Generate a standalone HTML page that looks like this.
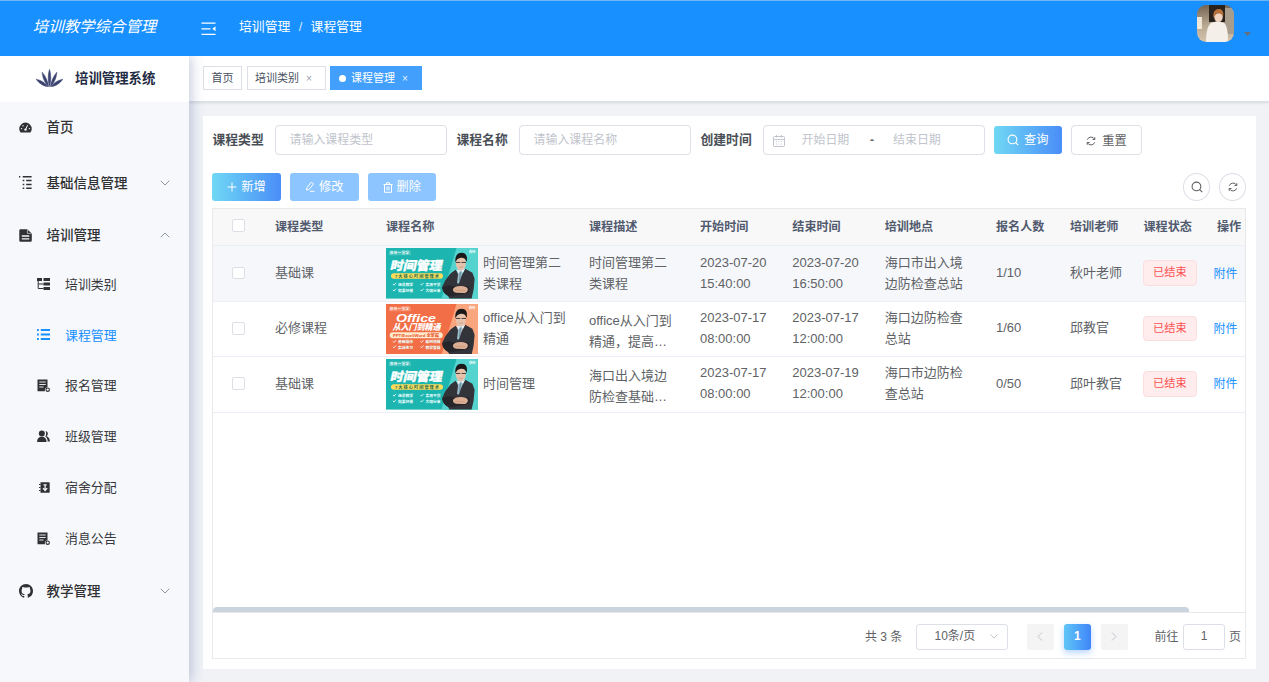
<!DOCTYPE html>
<html lang="zh-CN">
<head>
<meta charset="utf-8">
<title>培训教学综合管理</title>
<style>
*{box-sizing:border-box;margin:0;padding:0}
html,body{width:1269px;height:682px;overflow:hidden}
body{font-family:"Liberation Sans","Noto Sans CJK SC",sans-serif;background:#f0f2f6;color:#606266;position:relative;font-size:12.6px}
.abs{position:absolute}
#hdr{z-index:5;position:absolute;left:0;top:0;width:1269px;height:56px;background:#1890ff;border-top:1px solid #6db5f7}
#title{position:absolute;left:32.8px;top:14px;font-size:15.45px;font-style:italic;font-weight:400;color:#fff;line-height:24px;white-space:nowrap}
#crumb{position:absolute;left:239px;top:15px;line-height:22px;font-size:12.85px;color:#fff;white-space:nowrap}
#crumb .sep{margin:0 8.3px;font-weight:400;color:#d6e9ff}
#side{position:absolute;left:0;top:56px;width:189px;height:626px;background:#f6f8fc;box-shadow:2px 0 12px rgba(40,60,130,.28)}
#logo{position:absolute;left:0;top:0;width:189px;height:45.5px;background:#fff}
#logo span{position:absolute;left:75px;top:11.6px;font-size:13.4px;font-weight:700;color:#1f2c44;line-height:22px;white-space:nowrap}
.mi{position:absolute;left:0;width:189px;height:40px;line-height:40px;white-space:nowrap;color:#303133}
.mi .tx{position:absolute;left:46.5px;top:1px;font-size:13.5px;font-weight:500}
.mi.sub .tx{left:65px;font-size:12.9px;font-weight:400;color:#36383d}
.mi.act .tx{color:#1890ff}
.mi svg{position:absolute}
#tags{position:absolute;left:189px;top:56px;width:1080px;height:45.5px;background:#fff;box-shadow:0 1px 3px rgba(0,0,0,.09),0 0 3px rgba(0,0,0,.03);border-bottom:1px solid #dde0e7}
.tag{position:absolute;top:10px;height:24px;line-height:22px;border:1px solid #dcdfe6;background:#fff;color:#495060;font-size:11px;white-space:nowrap;padding:0 0 0 7.5px}
.tag.on{background:#42a0fc;border-color:#42a0fc;color:#fff}
.tag .x{display:inline-block;margin-left:7px;font-size:10.2px;color:#9aa1ad}
.tag.on .x{color:#e4f0ff}
.tag .dot{display:inline-block;width:7.5px;height:7.5px;border-radius:50%;background:#fff;margin-right:5px;position:relative;top:0}
#card{position:absolute;left:203px;top:116px;width:1052.5px;height:553px;background:#fff}
.lbl{position:absolute;font-size:12.8px;font-weight:700;color:#4a4f57;line-height:30px;top:9px;white-space:nowrap}
.inp{position:absolute;top:9px;height:30px;border:1px solid #dcdfe6;border-radius:4px;background:#fff;color:#c0c4cc;font-size:11.95px;line-height:28px;padding-left:13.5px;white-space:nowrap}
.btn{position:absolute;height:28px;border-radius:3px;color:#fff;font-size:12.2px;line-height:28px;white-space:nowrap;text-align:center}
.btn.g{background:linear-gradient(90deg,#6fd8f4 0%,#4a8df8 100%)}
.btn.l{background:#8cc5ff}
.btn.w{background:#fff;border:1px solid #dcdfe6;color:#606266;line-height:26px}
.cir{position:absolute;width:27px;height:27.6px;border:1px solid #dcdfe6;border-radius:50%;background:#fff}
#tb{position:absolute;left:9px;top:92px;width:1033.5px;height:405px;border:1px solid #e9e9ec;border-bottom:none;overflow:hidden}
#th{position:absolute;left:0;top:0;width:1040px;height:37px;background:#f8f8f9;border-bottom:1px solid #ebeef5}
#th span{position:absolute;top:7px;line-height:22px;font-size:12.1px;font-weight:700;color:#515a6e;white-space:nowrap}
.tr{position:absolute;left:0;width:1040px;border-bottom:1px solid #ebeef5;background:#fff}
.tr.hv{background:#f5f7fb}
.c{position:absolute;font-size:13px;line-height:21px;color:#606266;white-space:nowrap}
.ck{position:absolute;left:19px;width:12.6px;height:12.6px;border:1px solid #dcdfe6;border-radius:2px;background:#fff}
.st{position:absolute;left:930.2px;width:53.4px;height:25.6px;border:1px solid #fcdede;background:#ffeded;border-radius:4px;color:#f95252;font-size:11.2px;line-height:22.8px;text-align:center}
.lk{position:absolute;left:1000.5px;font-size:12px;line-height:22px;color:#1890ff;white-space:nowrap}
.thumb{position:absolute;left:173px}
#pg{position:absolute;left:9px;top:496px;width:1033.5px;height:47px;border:1px solid #e9e9ec;background:#fff;font-size:12px;color:#606266}
#pg .t{position:absolute;top:12.5px;line-height:22px;white-space:nowrap}
#pg .bx{position:absolute;top:11px;height:26px;border:1px solid #dcdfe6;border-radius:3px;background:#fff;line-height:23.5px;text-align:center}
#pg .pb{position:absolute;top:11px;width:27.5px;height:26px;border-radius:2px;background:#f4f4f5;color:#c0c4cc;text-align:center;line-height:25.5px}
#sb{position:absolute;left:10px;top:491px;width:976px;height:5.5px;background:#cad4df;border-radius:4px 4px 0 0}
</style>
</head>
<body>
<div id="hdr">
  <div id="title">培训教学综合管理</div>
  <svg class="abs" style="left:201px;top:21px" width="16" height="14" viewBox="0 0 16 14"><path d="M0.5 1.2H14.5M0.5 6.8H9.5M0.5 12.4H14.5" stroke="#fff" stroke-width="1.3" fill="none"/><path d="M14.5 4.3V9.3L11.3 6.8Z" fill="#fff"/></svg>
  <div id="crumb">培训管理<span class="sep">/</span>课程管理</div>
<svg class="abs" style="left:1197px;top:4px" width="37" height="37" viewBox="0 0 37 37">
<defs><filter id="avb" x="-10%" y="-10%" width="120%" height="120%"><feGaussianBlur stdDeviation=".5"/></filter><clipPath id="avc"><rect width="37" height="37" rx="9"/></clipPath>
<linearGradient id="avg" x1="0" y1="0" x2="0" y2="1"><stop offset="0" stop-color="#6b5a48"/><stop offset=".55" stop-color="#b9a892"/><stop offset="1" stop-color="#d9c9b4"/></linearGradient></defs>
<g clip-path="url(#avc)"><g filter="url(#avb)"><rect x="-3" y="-3" width="43" height="43" fill="url(#avg)"/>
<rect x="12" y="0" width="16" height="17" fill="#2a211b"/>
<rect x="0" y="12" width="5" height="12" fill="#efe6d6"/>
<rect x="28" y="3" width="9" height="26" fill="#a89c8c"/>
<path d="M9 37C9 26 11 19 15 17.5L21 16L27 18C30 20 31 27 31 37Z" fill="#f4efe8"/>
<ellipse cx="21.5" cy="11.5" rx="4.3" ry="5.5" fill="#f0d3c0"/>
<path d="M16.5 13C15.5 6 19 3.500 22.500 4C26 4.500 27 8 26 12C25 9 23 8 21 8.500C19 9 17.500 10.500 16.500 13Z" fill="#b5713a"/>
</g></g></svg>
<svg class="abs" style="left:1244px;top:30.5px" width="7" height="4.500" viewBox="0 0 7 4.500"><path d="M0 0H7L3.500 4.500Z" fill="#5f7186"/></svg>
</div>
<div id="tags">
  <div class="tag" style="left:14px;width:39px">首页</div>
  <div class="tag" style="left:57.5px;width:79px">培训类别<span class="x">×</span></div>
  <div class="tag on" style="left:141px;width:91.5px"><span class="dot"></span>课程管理<span class="x">×</span></div>
</div>
<div id="side">
  <div id="logo"><span>培训管理系统</span></div>
  <svg class="abs" style="left:36px;top:12.5px" width="27" height="18" viewBox="0 0 27 18"><g fill="#3b4470" stroke="#3b4470" stroke-width=".5"><path d="M13.5 17.5C12 13 11.6 6 13.5 0.3C15.4 6 15 13 13.5 17.5Z"/><path d="M12.6 17.6C9.5 15 6.5 9.5 6.2 3.2C9.6 7 12 12.5 12.6 17.6Z"/><path d="M14.4 17.6C17.5 15 20.5 9.5 20.8 3.2C17.4 7 15 12.5 14.4 17.6Z"/><path d="M12 17.8C8 17.4 3 14.5 0.2 10.2C5 11.2 9.6 14 12 17.8Z"/><path d="M15 17.8C19 17.4 24 14.5 26.8 10.2C22 11.2 17.4 14 15 17.8Z"/></g></svg>
  <div class="mi" style="top:51px"><svg style="left:19px;top:13.5px" width="13" height="13" viewBox="0 0 13 13"><path d="M6.5 1.6A6.2 6.2 0 0 0 0.3 7.8C0.3 9.3 0.8 10.6 1.6 11.4H11.4C12.2 10.6 12.7 9.3 12.7 7.8A6.2 6.2 0 0 0 6.5 1.6Z" fill="#303133"/><circle cx="6.5" cy="8.6" r="1.2" fill="#f6f8fc"/><path d="M6.5 8.6L8.6 4.2" stroke="#f6f8fc" stroke-width="1"/><circle cx="2.6" cy="7.6" r=".7" fill="#f6f8fc"/><circle cx="4" cy="4.8" r=".7" fill="#f6f8fc"/><circle cx="10.4" cy="7.6" r=".7" fill="#f6f8fc"/></svg><span class="tx">首页</span></div>
  <div class="mi" style="top:107px"><svg style="left:19px;top:13px" width="13" height="13" viewBox="0 0 13 13"><path d="M0 0.8H1.3M3.7 0.8H12.6M3.700 4.6H5.300M7.200 4.600H12.600M3.700 8.400H5.300M7.200 8.400H12.600M3.700 12.200H5.300M7.200 12.200H12.600" stroke="#303133" stroke-width="1.5" fill="none"/></svg><span class="tx">基础信息管理</span><svg style="left:160px;top:17px" width="10" height="6" viewBox="0 0 10 6"><path d="M0.8 0.8L5 5L9.2 0.8" stroke="#8e949e" stroke-width="1" fill="none"/></svg></div>
  <div class="mi" style="top:159px"><svg style="left:19px;top:13.5px" width="13" height="13" viewBox="0 0 13 13"><path d="M1.6 0.2H8.2L12.8 4.600V11.500A1.300 1.300 0 0 1 11.500 12.800H1.600A1.300 1.300 0 0 1 0.300 11.500V1.500A1.300 1.300 0 0 1 1.600 0.200Z" fill="#303133"/><path d="M8.400 0.400V4.400H12.600" stroke="#f6f8fc" stroke-width=".6" fill="none"/><path d="M2.800 7H10.300M2.800 9.800H10.300" stroke="#f6f8fc" stroke-width="1.300"/></svg><span class="tx">培训管理</span><svg style="left:160px;top:17px" width="10" height="6" viewBox="0 0 10 6"><path d="M0.8 5.2L5 1L9.2 5.2" stroke="#8e949e" stroke-width="1" fill="none"/></svg></div>
  <div class="mi sub" style="top:208px"><svg style="left:37px;top:14px" width="13" height="12" viewBox="0 0 13 12"><path d="M0 0H5V3H0ZM6.5 0H13V3H6.5ZM6.5 4.5H13V7.5H6.5ZM6.5 9H13V12H6.5Z" fill="#303133"/><path d="M1.2 3V10.5H6.5M1.2 6H6.5" stroke="#303133" stroke-width="1" fill="none"/></svg><span class="tx">培训类别</span></div>
  <div class="mi sub act" style="top:258.5px"><svg style="left:37px;top:14.5px" width="13" height="11" viewBox="0 0 13 11"><path d="M0 1H1.8M3.8 1H13M0 5.5H1.8M3.8 5.5H13M0 10H1.8M3.8 10H13" stroke="#1890ff" stroke-width="1.9" fill="none"/></svg><span class="tx">课程管理</span></div>
  <div class="mi sub" style="top:309px"><svg style="left:37px;top:13.5px" width="13" height="13" viewBox="0 0 13 13"><path d="M0.5 0.5H10.5V8.2A3 3 0 0 0 8 12.2H0.5Z" fill="#303133"/><path d="M2.3 3H8.7M2.3 5.5H8.7M2.3 8H6.5" stroke="#f6f8fc" stroke-width=".9"/><circle cx="10.7" cy="10.7" r="1.7" fill="none" stroke="#303133" stroke-width="1.1"/></svg><span class="tx">报名管理</span></div>
  <div class="mi sub" style="top:360px"><svg style="left:37px;top:13.5px" width="13" height="13" viewBox="0 0 13 13"><circle cx="4.8" cy="3.6" r="3" fill="#303133"/><path d="M0 12C0 8.5 2 6.800 4.8 6.8C7.6 6.8 9.6 8.5 9.6 12Z" fill="#303133"/><path d="M8.5 0.9A2.800 2.800 0 0 1 9.3 6.2C11.5 6.7 12.8 8.5 12.9 11.5H10.7C10.6 9 9.7 7.3 8.2 6.5C9.4 5.2 9.5 2.600 8.5 0.9Z" fill="#303133"/></svg><span class="tx">班级管理</span></div>
  <div class="mi sub" style="top:411px"><svg style="left:38.5px;top:14.5px" width="11" height="11" viewBox="0 0 11 11"><path d="M1.5 0.3H10A0.7 0.7 0 0 1 10.7 1V10A0.7 0.7 0 0 1 10 10.7H1.5Z" fill="#303133"/><path d="M0 2.5H1.5M0 5.5H1.500M0 8.5H1.5" stroke="#303133" stroke-width="1.2"/><path d="M6.1 2.5V8.3M4 6.2L6.1 8.5L8.2 6.2M4.5 2.8H7.7" stroke="#f6f8fc" stroke-width="1.2" fill="none"/></svg><span class="tx">宿舍分配</span></div>
  <div class="mi sub" style="top:462px"><svg style="left:37px;top:13.5px" width="13" height="13" viewBox="0 0 13 13"><path d="M0.5 0.5H10.5V8.2A3 3 0 0 0 8 12.2H0.5Z" fill="#303133"/><path d="M2.3 3H8.7M2.3 5.5H8.7M2.3 8H6.5" stroke="#f6f8fc" stroke-width=".9"/><circle cx="10.7" cy="10.7" r="1.7" fill="none" stroke="#303133" stroke-width="1.1"/></svg><span class="tx">消息公告</span></div>
  <div class="mi" style="top:515px"><svg style="left:18.5px;top:13px" width="14" height="14" viewBox="0 0 16 16"><path fill="#303133" fill-rule="evenodd" d="M8 0C3.58 0 0 3.58 0 8c0 3.54 2.29 6.53 5.47 7.59.4.07.55-.17.55-.38 0-.19-.01-.82-.01-1.49-2.010.37-2.530-.49-2.690-.94-.09-.23-.48-.94-.82-1.130-.28-.15-.68-.52-.01-.53.63-.01 1.080.58 1.230.82.72 1.210 1.870.87 2.330.66.07-.52.28-.87.51-1.070-1.780-.2-3.640-.89-3.640-3.950 0-.87.31-1.590.82-2.150-.08-.2-.36-1.020.08-2.120 0 0 .67-.21 2.2.82.64-.18 1.320-.27 2-.27.68 0 1.360.09 2 .27 1.530-1.040 2.2-.82 2.2-.82.44 1.100.16 1.920.08 2.120.51.56.82 1.270.82 2.150 0 3.070-1.870 3.750-3.650 3.950.29.25.54.73.54 1.480 0 1.070-.01 1.930-.01 2.200 0 .21.15.46.55.38A8.013 8.013 0 0 0 16 8c0-4.420-3.580-8-8-8z"/></svg><span class="tx">教学管理</span><svg style="left:160px;top:17px" width="10" height="6" viewBox="0 0 10 6"><path d="M0.8 0.8L5 5L9.2 0.8" stroke="#8e949e" stroke-width="1" fill="none"/></svg></div>
</div>
<div id="card">
  <div class="lbl" style="left:9.5px">课程类型</div>
  <div class="inp" style="left:72px;width:172px">请输入课程类型</div>
  <div class="lbl" style="left:253.5px">课程名称</div>
  <div class="inp" style="left:316px;width:172px">请输入课程名称</div>
  <div class="lbl" style="left:497.5px">创建时间</div>
  <div class="inp" style="left:560px;width:221.5px;padding-left:0">
    <svg class="abs" style="left:9px;top:8.5px" width="12" height="12" viewBox="0 0 12 12"><rect x=".5" y="1.5" width="11" height="10" rx="1" fill="none" stroke="#c0c4cc"/><path d="M.5 4.5H11.5M3.5 0V2.5M8.5 0V2.5M3 6.5H4M5.5 6.5H6.5M8 6.5H9M3 9H4M5.5 9H6.5M8 9H9" stroke="#c0c4cc" stroke-width=".9"/></svg>
    <span class="abs" style="left:37.5px;top:0">开始日期</span><span class="abs" style="left:106px;top:0;color:#606266;font-weight:700">-</span><span class="abs" style="left:129px;top:0">结束日期</span></div>
  <div class="btn g" style="left:790.5px;top:10px;width:68.5px"><svg style="vertical-align:-2px;margin-right:5px" width="12" height="12" viewBox="0 0 11 11"><circle cx="5" cy="5" r="4" fill="none" stroke="#fff" stroke-width="1"/><path d="M8 8L10.3 10.3" stroke="#fff" stroke-width="1"/></svg>查询</div>
  <div class="btn w" style="left:868.3px;top:9.3px;width:70.5px;height:29.8px;line-height:30.5px;border-radius:4px"><svg style="vertical-align:-1px;margin-right:6px" width="10" height="10" viewBox="0 0 10 10"><path d="M1.3 3.7A4 4 0 0 1 8.6 3.2M8.7 6.3A4 4 0 0 1 1.4 6.8" fill="none" stroke="#606266" stroke-width="1"/><path d="M8.8 1.2V3.5H6.5M1.2 8.8V6.5H3.5" fill="none" stroke="#606266" stroke-width="1"/></svg>重置</div>
  <div class="btn g" style="left:9px;top:57px;width:69px"><svg style="vertical-align:-1px;margin-right:4px" width="10" height="10" viewBox="0 0 10 10"><path d="M5 0.5V9.5M0.5 5H9.5" stroke="#fff" stroke-width="1"/></svg>新增</div>
  <div class="btn l" style="left:87px;top:57px;width:68.5px"><svg style="vertical-align:-1px;margin-right:4px" width="10" height="11" viewBox="0 0 10 11"><path d="M6.5 1L8.5 3L4 8.500L1.5 9L2 6.5Z" fill="none" stroke="#fff" stroke-width="1"/><path d="M5 10.3H9.5" stroke="#fff" stroke-width="1"/></svg>修改</div>
  <div class="btn l" style="left:164.5px;top:57px;width:68.5px"><svg style="vertical-align:-1.5px;margin-right:4px" width="10" height="11" viewBox="0 0 10 11"><path d="M0.5 2.5H9.5M3.5 2.5V0.8H6.5V2.5M1.5 2.5V10.3H8.5V2.5M4 4.5V8.3M6 4.5V8.3" fill="none" stroke="#fff" stroke-width="1"/></svg>删除</div>
  <div class="cir" style="left:979.8px;top:57px"><svg class="abs" style="left:7px;top:7.2px" width="12" height="12" viewBox="0 0 11 11"><circle cx="5" cy="5" r="4" fill="none" stroke="#606266" stroke-width="1"/><path d="M8 8L10.3 10.3" stroke="#606266" stroke-width="1"/></svg></div>
  <div class="cir" style="left:1015.9px;top:57px"><svg class="abs" style="left:8px;top:8px" width="10" height="10" viewBox="0 0 10 10"><path d="M1.3 3.7A4 4 0 0 1 8.6 3.2M8.7 6.3A4 4 0 0 1 1.4 6.8" fill="none" stroke="#606266" stroke-width="1"/><path d="M8.8 1.2V3.5H6.5M1.2 8.8V6.5H3.5" fill="none" stroke="#606266" stroke-width="1"/></svg></div>
<div id="tb"><div id="th"><div class="ck" style="top:10px"></div><span style="left:62px">课程类型</span><span style="left:173px">课程名称</span><span style="left:376px">课程描述</span><span style="left:487px">开始时间</span><span style="left:579.3px">结束时间</span><span style="left:671.7px">培训地点</span><span style="left:783px">报名人数</span><span style="left:857px">培训老师</span><span style="left:930.5px">课程状态</span><span style="left:1004px">操作</span></div>
<div class="tr hv" style="top:37px;height:56px"><div class="ck" style="top:20.7px"></div><div class="c" style="left:62px;top:16.25px">基础课</div><svg class="thumb" style="top:2.1999999999999993px" width="92" height="50.6" viewBox="0 0 92 51" preserveAspectRatio="none" font-family="Liberation Sans,Noto Sans CJK SC,sans-serif"><rect width="92" height="51" fill="#1db5b0"/><path d="M70.5 0H92V51H55.5Z" fill="#55d3ce"/><rect x="3" y="2.8" width="22" height="4.5" fill="#fff" opacity=".18"/><text x="4" y="6.4" font-size="3.4" font-weight="700" fill="#fff" textLength="19">秋叶一堂学</text><text x="83" y="5.5" font-size="3.4" font-weight="700" fill="#fff">秋叶</text><text x="8.6" y="22.5" font-size="12.4" font-weight="900" fill="#fff" stroke="#fff" stroke-width=".35" textLength="52" lengthAdjust="spacingAndGlyphs" transform="skewX(-12)">时间管理</text><rect x="5" y="25.5" width="52" height="5.5" rx="2.75" fill="#fbdc5b"/><text x="9" y="30" font-size="4.2" font-weight="700" fill="#2b6f4e" textLength="44">7大核心时间管理术</text><path d="M7.0 36.3L8.0 37.5L10.0 35.1" stroke="#fff" stroke-width=".8" fill="none"/><text x="12.0" y="38.3" font-size="3.8" font-weight="700" fill="#e9fffd" textLength="15">场景教学</text><path d="M34.5 36.3L35.5 37.5L37.5 35.1" stroke="#fff" stroke-width=".8" fill="none"/><text x="39.5" y="38.3" font-size="3.8" font-weight="700" fill="#e9fffd" textLength="15">实用干货</text><path d="M7.0 42.2L8.0 43.4L10.0 41.0" stroke="#fff" stroke-width=".8" fill="none"/><text x="12.0" y="44.2" font-size="3.8" font-weight="700" fill="#e9fffd" textLength="15">效果好提</text><path d="M34.5 42.2L35.5 43.4L37.5 41.0" stroke="#fff" stroke-width=".8" fill="none"/><text x="39.5" y="44.2" font-size="3.8" font-weight="700" fill="#e9fffd" textLength="15">大咖分享</text><g>
<path d="M69.7 22 L64.4 25.8 L59.2 32.8 L56 39.5 L57.4 44 L61.5 47.5 L63.5 51 L85.6 51 L87.6 42 L88.6 31 L86.4 25 L79.2 21 L74.5 30 Z" fill="#33333a"/>
<path d="M70.8 22 L78.600 21 L76.200 26 L72.800 36 L71 35.2 L72 27Z" fill="#9dbccb"/><path d="M73.800 24.500L75.200 24.500L74 33L72.800 35Z" fill="#6d8e9d"/>
<path d="M70.3 21.6 L72.6 25.5 L74.8 22.4 L77 25 L79 20.8 L74.6 22.6Z" fill="#e9f1f4"/>
<path d="M56.3 40 C60 37 66 37.5 70 39.5 L81 38.5 C84 39 85 44 81 45.500 L67 48.5 C61.5 49.500 57 46 56.3 40Z" fill="#25252a"/>
<path d="M67.5 40.5 C70 38 76 37.6 80.5 39.5 C82.8 41 82 44.6 78.5 45.4 L70.5 45.2 C67.5 44.6 66.2 42.5 67.5 40.5Z" fill="#ddb096"/>
<path d="M69 43.2 C72 42.2 76 42.4 79 43.3" stroke="#b98468" stroke-width=".5" fill="none"/>
<ellipse cx="74.8" cy="15.3" rx="5" ry="7.1" fill="#e8c3ab"/>
<path d="M69.5 14.5 C68.6 8 71.5 4.800 75.6 4.800 C79.8 4.800 81.8 8 80.7 14 C79.900 11.2 78 9.600 75 9.800 C72.4 10 70.500 11.600 69.500 14.500Z" fill="#1b1919"/>
<path d="M70 14.6H74.300M75.500 14.6H80" stroke="#3a3234" stroke-width=".9"/>
<path d="M72.800 18.800C74 19.800 75.800 19.800 77 18.600" stroke="#b5796a" stroke-width=".5" fill="none"/>
</g></svg><div class="c" style="left:270px;top:5.75px">时间管理第二<br>类课程</div><div class="c" style="left:376px;top:5.75px">时间管理第二<br>类课程</div><div class="c" style="left:487px;top:5.75px">2023-07-20<br>15:40:00</div><div class="c" style="left:579.3px;top:5.75px">2023-07-20<br>16:50:00</div><div class="c" style="left:671.7px;top:5.75px">海口市出入境<br>边防检查总站</div><div class="c" style="left:783px;top:16.25px">1/10</div><div class="c" style="left:857px;top:16.25px">秋叶老师</div><div class="st" style="top:14.2px">已结束</div><div class="lk" style="top:16.5px">附件</div></div>
<div class="tr" style="top:93px;height:55px"><div class="ck" style="top:20.2px"></div><div class="c" style="left:62px;top:15.2px">必修课程</div><svg class="thumb" style="top:1.6999999999999993px" width="92" height="50.6" viewBox="0 0 92 51" preserveAspectRatio="none" font-family="Liberation Sans,Noto Sans CJK SC,sans-serif"><rect width="92" height="51" fill="#f16e46"/><path d="M70.5 0H92V51H55.5Z" fill="#f9a67f"/><rect x="3" y="2.8" width="22" height="4.5" fill="#fff" opacity=".18"/><text x="4" y="6.4" font-size="3.4" font-weight="700" fill="#fff" textLength="19">秋叶一堂学</text><text x="83" y="5.5" font-size="3.4" font-weight="700" fill="#fff">秋叶</text><text x="10" y="18.3" font-size="11.5" font-weight="900" font-style="italic" fill="#fff" textLength="40" lengthAdjust="spacingAndGlyphs">Office</text><text x="6.5" y="26.6" font-size="8.5" font-weight="900" font-style="italic" fill="#fff" textLength="48" lengthAdjust="spacingAndGlyphs">从入门到精通</text><rect x="3.7" y="28.6" width="53" height="5.8" rx="2.9" fill="#ffeccc"/><text x="7" y="33.2" font-size="4.2" font-weight="700" fill="#e8502a" textLength="46">PPT/Excel/Word 全掌握</text><path d="M7.0 37.6L8.0 38.8L10.0 36.4" stroke="#fff" stroke-width=".8" fill="none"/><text x="12.0" y="39.6" font-size="3.8" font-weight="700" fill="#e9fffd" textLength="15">基础操作</text><path d="M34.5 37.6L35.5 38.8L37.5 36.4" stroke="#fff" stroke-width=".8" fill="none"/><text x="39.5" y="39.6" font-size="3.8" font-weight="700" fill="#e9fffd" textLength="15">案例讲解</text><path d="M7.0 43.0L8.0 44.2L10.0 41.8" stroke="#fff" stroke-width=".8" fill="none"/><text x="12.0" y="45.0" font-size="3.8" font-weight="700" fill="#e9fffd" textLength="15">实战练习</text><path d="M34.5 43.0L35.5 44.2L37.5 41.8" stroke="#fff" stroke-width=".8" fill="none"/><text x="39.5" y="45.0" font-size="3.8" font-weight="700" fill="#e9fffd" textLength="15">教学答疑</text><g>
<path d="M69.7 22 L64.4 25.8 L59.2 32.8 L56 39.5 L57.4 44 L61.5 47.5 L63.5 51 L85.6 51 L87.6 42 L88.6 31 L86.4 25 L79.2 21 L74.5 30 Z" fill="#33333a"/>
<path d="M70.8 22 L78.600 21 L76.200 26 L72.800 36 L71 35.2 L72 27Z" fill="#9dbccb"/><path d="M73.800 24.500L75.200 24.500L74 33L72.800 35Z" fill="#6d8e9d"/>
<path d="M70.3 21.6 L72.6 25.5 L74.8 22.4 L77 25 L79 20.8 L74.6 22.6Z" fill="#e9f1f4"/>
<path d="M56.3 40 C60 37 66 37.5 70 39.5 L81 38.5 C84 39 85 44 81 45.500 L67 48.5 C61.5 49.500 57 46 56.3 40Z" fill="#25252a"/>
<path d="M67.5 40.5 C70 38 76 37.6 80.5 39.5 C82.8 41 82 44.6 78.5 45.4 L70.5 45.2 C67.5 44.6 66.2 42.5 67.5 40.5Z" fill="#ddb096"/>
<path d="M69 43.2 C72 42.2 76 42.4 79 43.3" stroke="#b98468" stroke-width=".5" fill="none"/>
<ellipse cx="74.8" cy="15.3" rx="5" ry="7.1" fill="#e8c3ab"/>
<path d="M69.5 14.5 C68.6 8 71.5 4.800 75.6 4.800 C79.8 4.800 81.8 8 80.7 14 C79.900 11.2 78 9.600 75 9.800 C72.4 10 70.500 11.600 69.500 14.500Z" fill="#1b1919"/>
<path d="M70 14.6H74.300M75.500 14.6H80" stroke="#3a3234" stroke-width=".9"/>
<path d="M72.800 18.800C74 19.800 75.800 19.800 77 18.600" stroke="#b5796a" stroke-width=".5" fill="none"/>
</g></svg><div class="c" style="left:270px;top:4.7px">office从入门到<br>精通</div><div class="c" style="left:376px;top:7.5px">office从入门到<br>精通，提高…</div><div class="c" style="left:487px;top:4.7px">2023-07-17<br>08:00:00</div><div class="c" style="left:579.3px;top:4.7px">2023-07-17<br>12:00:00</div><div class="c" style="left:671.7px;top:4.7px">海口边防检查<br>总站</div><div class="c" style="left:783px;top:15.2px">1/60</div><div class="c" style="left:857px;top:15.2px">邱教官</div><div class="st" style="top:13.7px">已结束</div><div class="lk" style="top:16.0px">附件</div></div>
<div class="tr" style="top:148px;height:55.5px"><div class="ck" style="top:20.45px"></div><div class="c" style="left:62px;top:15.75px">基础课</div><svg class="thumb" style="top:1.9499999999999993px" width="92" height="50.6" viewBox="0 0 92 51" preserveAspectRatio="none" font-family="Liberation Sans,Noto Sans CJK SC,sans-serif"><rect width="92" height="51" fill="#1db5b0"/><path d="M70.5 0H92V51H55.5Z" fill="#55d3ce"/><rect x="3" y="2.8" width="22" height="4.5" fill="#fff" opacity=".18"/><text x="4" y="6.4" font-size="3.4" font-weight="700" fill="#fff" textLength="19">秋叶一堂学</text><text x="83" y="5.5" font-size="3.4" font-weight="700" fill="#fff">秋叶</text><text x="8.6" y="22.5" font-size="12.4" font-weight="900" fill="#fff" stroke="#fff" stroke-width=".35" textLength="52" lengthAdjust="spacingAndGlyphs" transform="skewX(-12)">时间管理</text><rect x="5" y="25.5" width="52" height="5.5" rx="2.75" fill="#fbdc5b"/><text x="9" y="30" font-size="4.2" font-weight="700" fill="#2b6f4e" textLength="44">7大核心时间管理术</text><path d="M7.0 36.3L8.0 37.5L10.0 35.1" stroke="#fff" stroke-width=".8" fill="none"/><text x="12.0" y="38.3" font-size="3.8" font-weight="700" fill="#e9fffd" textLength="15">场景教学</text><path d="M34.5 36.3L35.5 37.5L37.5 35.1" stroke="#fff" stroke-width=".8" fill="none"/><text x="39.5" y="38.3" font-size="3.8" font-weight="700" fill="#e9fffd" textLength="15">实用干货</text><path d="M7.0 42.2L8.0 43.4L10.0 41.0" stroke="#fff" stroke-width=".8" fill="none"/><text x="12.0" y="44.2" font-size="3.8" font-weight="700" fill="#e9fffd" textLength="15">效果好提</text><path d="M34.5 42.2L35.5 43.4L37.5 41.0" stroke="#fff" stroke-width=".8" fill="none"/><text x="39.5" y="44.2" font-size="3.8" font-weight="700" fill="#e9fffd" textLength="15">大咖分享</text><g>
<path d="M69.7 22 L64.4 25.8 L59.2 32.8 L56 39.5 L57.4 44 L61.5 47.5 L63.5 51 L85.6 51 L87.6 42 L88.6 31 L86.4 25 L79.2 21 L74.5 30 Z" fill="#33333a"/>
<path d="M70.8 22 L78.600 21 L76.200 26 L72.800 36 L71 35.2 L72 27Z" fill="#9dbccb"/><path d="M73.800 24.500L75.200 24.500L74 33L72.800 35Z" fill="#6d8e9d"/>
<path d="M70.3 21.6 L72.6 25.5 L74.8 22.4 L77 25 L79 20.8 L74.6 22.6Z" fill="#e9f1f4"/>
<path d="M56.3 40 C60 37 66 37.5 70 39.5 L81 38.5 C84 39 85 44 81 45.500 L67 48.5 C61.5 49.500 57 46 56.3 40Z" fill="#25252a"/>
<path d="M67.5 40.5 C70 38 76 37.6 80.5 39.5 C82.8 41 82 44.6 78.5 45.4 L70.5 45.2 C67.5 44.6 66.2 42.5 67.5 40.5Z" fill="#ddb096"/>
<path d="M69 43.2 C72 42.2 76 42.4 79 43.3" stroke="#b98468" stroke-width=".5" fill="none"/>
<ellipse cx="74.8" cy="15.3" rx="5" ry="7.1" fill="#e8c3ab"/>
<path d="M69.5 14.5 C68.6 8 71.5 4.800 75.6 4.800 C79.8 4.800 81.8 8 80.7 14 C79.900 11.2 78 9.600 75 9.800 C72.4 10 70.500 11.600 69.500 14.500Z" fill="#1b1919"/>
<path d="M70 14.6H74.300M75.500 14.6H80" stroke="#3a3234" stroke-width=".9"/>
<path d="M72.800 18.800C74 19.800 75.800 19.800 77 18.600" stroke="#b5796a" stroke-width=".5" fill="none"/>
</g></svg><div class="c" style="left:270px;top:15.75px">时间管理</div><div class="c" style="left:376px;top:8.05px">海口出入境边<br>防检查基础…</div><div class="c" style="left:487px;top:5.25px">2023-07-17<br>08:00:00</div><div class="c" style="left:579.3px;top:5.25px">2023-07-19<br>12:00:00</div><div class="c" style="left:671.7px;top:5.25px">海口市边防检<br>查总站</div><div class="c" style="left:783px;top:15.75px">0/50</div><div class="c" style="left:857px;top:15.75px">邱叶教官</div><div class="st" style="top:13.95px">已结束</div><div class="lk" style="top:16.25px">附件</div></div>
</div>
<div id="sb"></div>
<div id="pg">
  <span class="t" style="left:652px">共 3 条</span>
  <div class="bx" style="left:703px;width:92px;text-align:left;padding-left:17.5px">10条/页<svg class="abs" style="left:73px;top:9px" width="8" height="5" viewBox="0 0 8 5"><path d="M.5 .5L4 4L7.5 .5" stroke="#c0c4cc" stroke-width="1" fill="none"/></svg></div>
  <div class="pb" style="left:813.5px"><svg width="6" height="9" viewBox="0 0 6 9" style="vertical-align:-1px"><path d="M5 .5L1 4.500L5 8.5" stroke="#c0c4cc" stroke-width="1" fill="none"/></svg></div>
  <div class="pb" style="left:850.5px;background:linear-gradient(90deg,#5fc6f6,#3f86fa);color:#fff;font-weight:700;border-radius:3px;box-shadow:0 3px 6px rgba(64,140,250,.35)">1</div>
  <div class="pb" style="left:887.5px"><svg width="6" height="9" viewBox="0 0 6 9" style="vertical-align:-1px"><path d="M1 .5L5 4.500L1 8.5" stroke="#c0c4cc" stroke-width="1" fill="none"/></svg></div>
  <span class="t" style="left:941.5px">前往</span>
  <div class="bx" style="left:970px;width:42px">1</div>
  <span class="t" style="left:1016px">页</span>
</div>
</div>
</body>
</html>
